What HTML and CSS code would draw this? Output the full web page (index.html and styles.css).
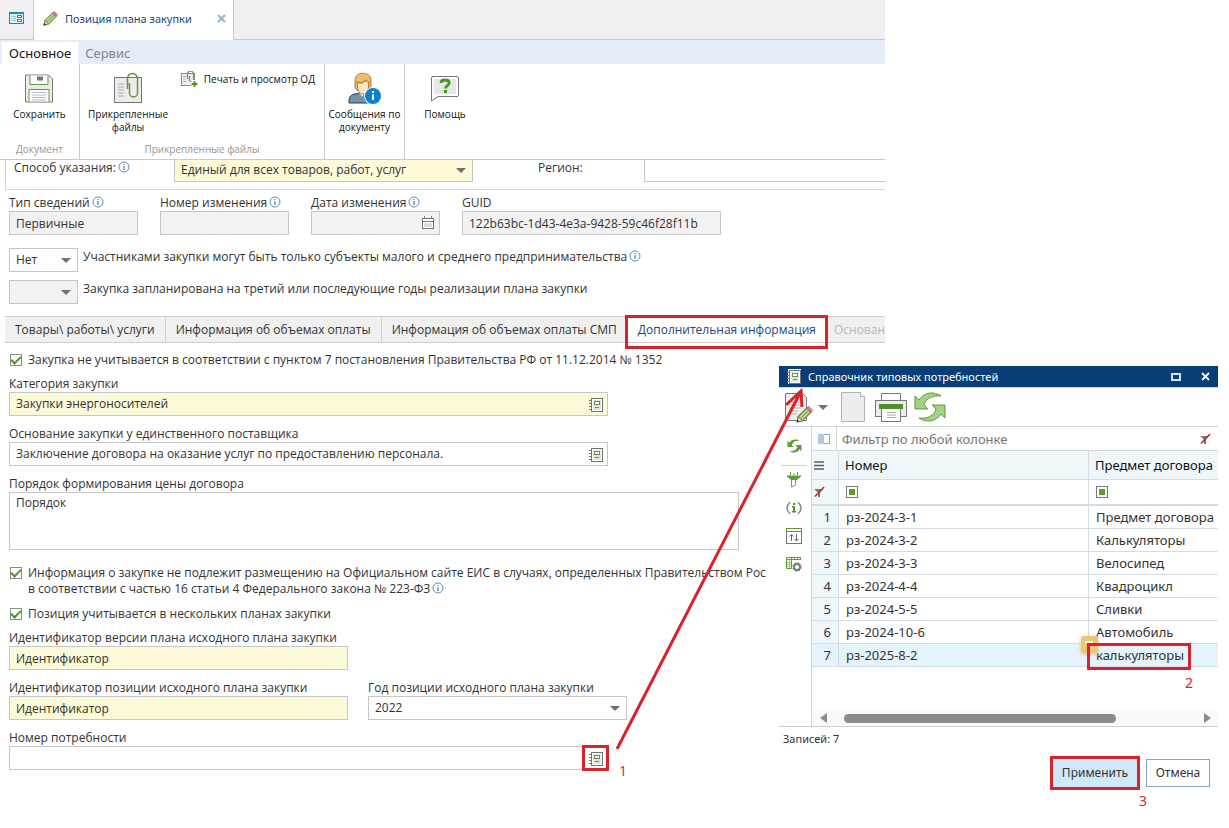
FILE: index.html
```html
<!DOCTYPE html>
<html lang="ru">
<head>
<meta charset="utf-8">
<title>Позиция плана закупки</title>
<link rel="stylesheet" href="styles.css">
</head>
<body>
<svg class="defs" aria-hidden="true">
  <symbol id="info" viewBox="0 0 12 12">
    <circle cx="6" cy="6" r="5" fill="#fff" stroke="#5f8bbd"/>
    <path d="M5.500 3h1v1h-1zM5.500 5h1v4h-1z" fill="#35608f"/>
  </symbol>
  <symbol id="book" viewBox="0 0 14 15">
    <rect x="2.500" y="1.500" width="11" height="13" fill="#fff" stroke="#6f7275"/>
    <rect x="4" y="3" width="8" height="10" fill="#dfe3e3"/>
    <path d="M0 3.500h2M0 6.500h2M0 9.500h2M0 12.500h2" stroke="#6f7275"/>
    <rect x="5.500" y="4.500" width="5" height="3" fill="#fff" stroke="#639a35"/>
    <path d="M6 10.500h4" stroke="#639a35"/>
  </symbol>
  <symbol id="nofilter" viewBox="0 0 12 12">
    <path d="M0 3h9L6 6.500V11H4V6.500z" fill="#777"/>
    <path d="M1 10.500 10 1" stroke="#d01f26" stroke-width="1.500"/>
  </symbol>
  <symbol id="refresh" viewBox="0 0 32 30">
    <path d="M1 4v13h13l-4-4c2-7 9-10 17-9C20-1 10 0 5 8z"/>
    <path d="M31 26V13H18l4 4c-2 7-9 10-17 9 7 5 17 4 22-4z"/>
  </symbol>
  <symbol id="pencil" viewBox="0 0 16 16">
    <path d="M1 15l1-5L10 2l4 4-8 8z" fill="#8fc163" stroke="#5c8a35"/>
    <path d="M3 11l8-8M5 13l8-8" stroke="#e4f2d5" stroke-width=".8"/>
    <path d="M10 2l2-1.500 3.500 3.500L14 6z" fill="#e77c8e" stroke="#b9586b" stroke-width=".8"/>
    <path d="M1 15l1-5 4 4z" fill="#f1dcae" stroke="#7a6b4c" stroke-width=".8"/>
    <path d="M.5 15.500l.8-2.800 2 2z" fill="#333"/>
  </symbol>
</svg>

<main class="app">
  <nav class="window-tabs">
    <button class="home" aria-label="Главная">
      <svg width="16" height="13" viewBox="0 0 16 13"><rect x=".5" y=".5" width="14" height="11" fill="#e3f3fc" stroke="#1787cf"/><path d="M0 1h15" stroke="#1787cf" stroke-width="2"/><path d="M2 4.500h1M4 4.500h3M2 6.500h1M4 6.500h3M2 8.500h1M4 8.500h3" stroke="#8cc6ea"/><rect x="8.500" y="3.500" width="4" height="2" fill="#fff" stroke="#1787cf"/><rect x="8.500" y="7.500" width="4" height="2" fill="#fff" stroke="#1787cf"/></svg>
    </button>
    <div class="window-tab">
      <svg width="15" height="15"><use href="#pencil"/></svg>
      <span>Позиция плана закупки</span>
      <button class="close" aria-label="Закрыть"><svg width="9" height="9" viewBox="0 0 9 9"><path d="M1 1l7 7M8 1 1 8" stroke="#9db0c4" stroke-width="2"/></svg></button>
    </div>
  </nav>

  <nav class="ribbon-tabs">
    <button class="active">Основное</button>
    <button>Сервис</button>
  </nav>

  <section class="ribbon">
    <div class="group g-doc">
      <div class="tools">
        <button class="tool">
          <svg width="28" height="28" viewBox="0 0 28 28"><path d="M.5.5h23l4 4v23H.5z" fill="#ececec" stroke="#74777a"/><path d="M5 1v9h18V1" fill="#fff" stroke="#639a35"/><rect x="12" y="2" width="6" height="4" fill="#74777a"/><path d="M4 27V15h20v12" fill="#fff" stroke="#639a35"/><path d="M7 18h14M7 20.500h14M7 23h14M7 25.500h14" stroke="#bbb"/></svg>
          <span>Сохранить</span>
        </button>
      </div>
      <span class="caption">Документ</span>
    </div>
    <div class="group g-files">
      <div class="tools">
        <button class="tool">
          <svg width="29" height="31" viewBox="0 0 29 31"><rect x=".5" y="4.500" width="27" height="25" fill="#ececec" stroke="#74777a"/><path d="M4 11h6M4 14h6M4 17h6M4 20h6M4 23h6" stroke="#a9acae"/><path d="M14.500 16V5.500a5 5 0 0 1 10 0V20a4 4 0 0 1-8 0V10" transform="translate(-1 0)" fill="none" stroke="#639a35" stroke-width="1.500"/></svg>
          <span>Прикрепленные<br>файлы</span>
        </button>
        <button class="tool-inline">
          <svg width="17" height="17" viewBox="0 0 17 17"><rect x=".5" y="2.500" width="13" height="12" fill="#f0f0f0" stroke="#85888a"/><path d="M2 5.500h3M2 8h3M2 10.500h3" stroke="#a9acae"/><path d="M6.500 8V3a3 3 0 0 1 6 0v6a2 2 0 0 1-4 0V5" fill="none" stroke="#639a35" stroke-width="1.200"/><path d="M13 9v7M9.500 12.500h7" stroke="#fff" stroke-width="4"/><path d="M13.500 10v6M10.500 13h6" stroke="#4d9620" stroke-width="2"/></svg>
          <span>Печать и просмотр ОД</span>
        </button>
      </div>
      <span class="caption">Прикрепленные файлы</span>
    </div>
    <div class="group g-msg">
      <div class="tools">
        <button class="tool">
          <svg width="34" height="33" viewBox="0 0 34 33"><path d="M1 31v-3q0-5 6-6l4-1 7 1 6 3v6z" fill="#7390a8" stroke="#29435a"/><path d="M10 19l4 6 4-6v-4h-8z" fill="#f9dfbd"/><path d="M9 10q5 3 8-1l4 2c0 7-2 11-6 11s-7-5-6-12z" fill="#fbe5c8" stroke="#a87a32" stroke-width=".8"/><path d="M7 16V8c0-9 16-9 16 0v8l-3 3 1-9-3-2q-4 4-9 2l1 9z" fill="#f0bd69" stroke="#98702c" stroke-width=".8"/><circle cx="25" cy="24" r="9" fill="#fff"/><circle cx="25" cy="24" r="8" fill="#0d81cc"/><path d="M24 19h2v2h-2zM24 22.500h2V28h-2z" fill="#fff"/></svg>
          <span>Сообщения по<br>документу</span>
        </button>
      </div>
    </div>
    <div class="group g-help">
      <div class="tools">
        <button class="tool">
          <svg width="30" height="27" viewBox="0 0 30 27"><path d="M2 1.500h25q1.500 0 1.500 1.500v17q0 1.500-1.500 1.500H8l-6.500 4.500V3q0-1.500 1.500-1.500z" fill="#fff" stroke="#74777a"/><rect x="4" y="4" width="22" height="15" fill="#e6e6e6"/><path d="M11 8q0-3 4-3 4.200 0 4.200 3 0 1.700-2.200 3-1.500.8-1.500 2.500" fill="none" stroke="#3f9a17" stroke-width="2.800"/><rect x="14" y="15" width="3" height="3" fill="#3f9a17"/></svg>
          <span>Помощь</span>
        </button>
      </div>
    </div>
  </section>

  <form class="form">
    <div class="scope">
      <label class="scope-label" for="scope">Способ указания:<svg class="info"><use href="#info"/></svg></label>
      <span class="select yellow scope-select"><select id="scope"><option>Единый для всех товаров, работ, услуг</option></select></span>
      <label class="region-label" for="region">Регион:</label>
      <input class="box region" id="region">
    </div>

    <div class="row meta">
      <div class="field w-s"><label for="type">Тип сведений<svg class="info"><use href="#info"/></svg></label><input class="box gray" id="type" value="Первичные" readonly></div>
      <div class="field w-s"><label for="num">Номер изменения<svg class="info"><use href="#info"/></svg></label><input class="box gray" id="num" readonly></div>
      <div class="field w-s"><label for="date">Дата изменения<svg class="info"><use href="#info"/></svg></label>
        <span class="box gray combo"><input id="date" readonly><button type="button" aria-label="Календарь"><svg width="14" height="14" viewBox="0 0 14 14"><rect x="1.500" y="2.500" width="11" height="10" fill="#fff" stroke="#74777a"/><path d="M1 5.500h12" stroke="#74777a"/><rect x="3" y="7" width="8" height="4" fill="#ddd"/><path d="M3.500 0v3M10.500 0v3" stroke="#639a35"/></svg></button></span></div>
      <div class="field w-m"><label for="guid">GUID</label><input class="box gray" id="guid" value="122b63bc-1d43-4e3a-9428-59c46f28f11b" readonly></div>
    </div>

    <div class="choices">
      <div class="choice"><span class="select"><select id="smb"><option>Нет</option></select></span><label for="smb">Участниками закупки могут быть только субъекты малого и среднего предпринимательства<svg class="info"><use href="#info"/></svg></label></div>
      <div class="choice"><span class="select gray"><select id="later"><option></option></select></span><label for="later">Закупка запланирована на третий или последующие годы реализации плана закупки</label></div>
    </div>

    <div class="tabs" role="tablist">
      <button type="button" role="tab">Товары\ работы\ услуги</button>
      <button type="button" role="tab">Информация об объемах оплаты</button>
      <button type="button" role="tab">Информация об объемах оплаты СМП</button>
      <button type="button" role="tab" class="current" aria-selected="true">Дополнительная информация</button>
      <button type="button" role="tab" class="off" disabled>Основан</button>
    </div>

    <div class="panel">
      <label class="check"><input type="checkbox" checked><span>Закупка не учитывается в соответствии с пунктом 7 постановления Правительства РФ от 11.12.2014 № 1352</span></label>
      <div class="fields">
        <div class="field w-l"><label for="cat">Категория закупки</label><span class="box yellow combo"><input id="cat" value="Закупки энергоносителей"><button type="button" aria-label="Выбрать"><svg width="14" height="15"><use href="#book"/></svg></button></span></div>
        <div class="field w-l"><label for="base">Основание закупки у единственного поставщика</label><span class="box combo"><input id="base" value="Заключение договора на оказание услуг по предоставлению персонала."><button type="button" aria-label="Выбрать"><svg width="14" height="15"><use href="#book"/></svg></button></span></div>
        <div class="field w-xl"><label for="order">Порядок формирования цены договора</label><textarea class="box" id="order">Порядок</textarea></div>
      </div>
      <div class="checks">
        <label class="check"><input type="checkbox" checked><span>Информация о закупке не подлежит размещению на Официальном сайте ЕИС в случаях, определенных Правительством Рос<br>в соответствии с частью 16 статьи 4 Федерального закона № 223-ФЗ<svg class="info"><use href="#info"/></svg></span></label>
        <label class="check"><input type="checkbox" checked><span>Позиция учитывается в нескольких планах закупки</span></label>
      </div>
      <div class="fields">
        <div class="field w-h"><label for="ver">Идентификатор версии плана исходного плана закупки</label><input class="box yellow" id="ver" value="Идентификатор"></div>
        <div class="row ids">
          <div class="field w-h"><label for="pos">Идентификатор позиции исходного плана закупки</label><input class="box yellow" id="pos" value="Идентификатор"></div>
          <div class="field w-m"><label for="year">Год позиции исходного плана закупки</label><span class="select"><select id="year"><option>2022</option></select></span></div>
        </div>
        <div class="field w-l"><label for="need">Номер потребности</label><span class="box combo"><input id="need"><button type="button" class="marked" aria-label="Выбрать"><svg width="14" height="15"><use href="#book"/></svg><span class="step step-1">1</span></button></span></div>
      </div>
    </div>
  </form>
</main>

<section class="dialog" role="dialog" aria-labelledby="dlg">
  <header class="titlebar">
    <svg width="14" height="15"><rect x="1" width="13" height="15" fill="#fff"/><use href="#book"/></svg>
    <h2 id="dlg">Справочник типовых потребностей</h2>
    <button aria-label="Развернуть"><svg width="10" height="8" viewBox="0 0 10 8"><rect x="1" y="1" width="8" height="6" fill="none" stroke="#d5e6f4" stroke-width="2"/></svg></button>
    <button aria-label="Закрыть"><svg width="9" height="9" viewBox="0 0 9 9"><path d="M1 1l7 7M8 1 1 8" stroke="#e8f2fa" stroke-width="2"/></svg></button>
  </header>
  <div class="toolbar">
    <button aria-label="Изменить"><svg width="29" height="31" viewBox="0 0 29 31"><path d="M.5 1.500h17l4 4v23H.5z" fill="#efefef" stroke="#74777a"/><path d="M4 10h12M4 13h12M4 16h12M4 19h9M4 22h8" stroke="#b5b5b5"/><g transform="translate(11 14)"><use href="#pencil" width="17" height="17"/></g></svg></button>
    <button class="drop" aria-label="Другие действия"></button>
    <button aria-label="Создать"><svg width="24" height="31" viewBox="0 0 24 31"><path d="M.5.500h19l4 4v25H.5z" fill="#ededed" stroke="#b0b3b5"/><path d="M19.500.5v4h4" fill="#fff" stroke="#b0b3b5"/></svg></button>
    <button aria-label="Печать"><svg width="32" height="31" viewBox="0 0 32 31"><path d="M6.500 9V1.500h19V9" fill="#fff" stroke="#74777a"/><rect x=".5" y="8.500" width="31" height="16" fill="#ededed" stroke="#74777a"/><rect x="6.500" y="16.500" width="19" height="13" fill="#fff" stroke="#74777a"/><rect x="4" y="12" width="24" height="5" fill="#539026"/><path d="M12 20.500h9M12 23h9M12 25.500h9" stroke="#aaa"/></svg></button>
    <button aria-label="Обновить"><svg class="big-refresh" width="32" height="30"><use href="#refresh"/></svg></button>
  </div>
  <div class="work">
    <aside class="rail">
      <button class="first" aria-label="Обновить"><svg class="small-refresh" width="15" height="14"><use href="#refresh"/></svg></button>
      <button aria-label="Фильтр"><svg width="14" height="16" viewBox="0 0 14 16"><path d="M0 3.500h14v1L10 8H4L0 4.500z" fill="#639a35"/><path d="M4.500 8v7l4-2V8" fill="#fff" stroke="#888"/><path d="M3.500 0v3M7 1v2M10.500 0v3" stroke="#639a35"/></svg></button>
      <button aria-label="Сведения"><svg width="16" height="14" viewBox="0 0 16 14"><path d="M4 1Q-2 7 4 13M12 1q6 6 0 12" fill="none" stroke="#888" stroke-width="1.500"/><path d="M7 2h2v2H7zM6 5h3v5h1v1.500H6V10h1V6.500H6z" fill="#4d9620"/></svg></button>
      <button aria-label="Сортировка"><svg width="16" height="16" viewBox="0 0 16 16"><rect x=".5" y=".5" width="15" height="15" fill="#fff" stroke="#74777a"/><path d="M0 .5h16M0 3.500h16" stroke="#639a35"/><path d="M5.500 13V7M3.500 8.500l2-2 2 2M10.500 6v7M8.500 11l2 2 2-2" fill="none" stroke="#666"/></svg></button>
      <button aria-label="Настройки таблицы"><svg width="16" height="16" viewBox="0 0 16 16"><path d="M3.500 4v9M0 6.500h6M0 8.500h6M0 10.500h6" stroke="#a5c88a"/><path d="M.5 1.500v11h5v-11zM5 1.500h10M0 3.500h15M8.500 1v3M11.500 1v3M14.500 1v3" fill="none" stroke="#639a35"/><circle cx="11" cy="11" r="3" fill="#fff" stroke="#74777a" stroke-width="1.800"/><circle cx="11" cy="11" r="4.300" fill="none" stroke="#74777a" stroke-dasharray="1.800 1.600"/></svg></button>
    </aside>
    <div class="grid">
      <div class="search">
        <button aria-label="Колонки"><svg width="12" height="10" viewBox="0 0 12 10"><rect x=".5" y=".5" width="11" height="9" fill="#fff" stroke="#8ba8c4"/><rect width="6" height="10" fill="#b3c8dc"/></svg></button>
        <input aria-label="Фильтр" placeholder="Фильтр по любой колонке">
        <button aria-label="Сбросить фильтр"><svg width="12" height="12"><use href="#nofilter"/></svg></button>
      </div>
      <table>
        <thead>
          <tr><th class="n"><svg width="10" height="9" viewBox="0 0 10 9"><path d="M0 1h10M0 4.500h10M0 8h10" stroke="#5d6265" stroke-width="1.500"/></svg></th><th class="name">Номер</th><th>Предмет договора</th></tr>
          <tr class="filters"><td class="n"><svg width="12" height="12"><use href="#nofilter"/></svg></td><td><span class="mark"></span></td><td><span class="mark"></span></td></tr>
        </thead>
        <tbody>
          <tr><td class="n">1</td><td>рз-2024-3-1</td><td>Предмет договора</td></tr>
          <tr><td class="n">2</td><td>рз-2024-3-2</td><td>Калькуляторы</td></tr>
          <tr><td class="n">3</td><td>рз-2024-3-3</td><td>Велосипед</td></tr>
          <tr><td class="n">4</td><td>рз-2024-4-4</td><td>Квадроцикл</td></tr>
          <tr><td class="n">5</td><td>рз-2024-5-5</td><td>Сливки</td></tr>
          <tr><td class="n">6</td><td>рз-2024-10-6</td><td>Автомобиль</td></tr>
          <tr class="picked"><td class="n">7</td><td>рз-2025-8-2</td><td class="target"><span class="badge"></span>калькуляторы<span class="frame"></span><span class="step step-2">2</span></td></tr>
        </tbody>
      </table>
      <div class="scrollbar"><i class="arrow-l"></i><div class="track"><i class="thumb"></i></div><i class="arrow-r"></i></div>
    </div>
  </div>
  <p class="count">Записей: 7</p>
  <footer class="actions">
    <button class="apply">Применить<span class="step step-3">3</span></button>
    <button class="cancel">Отмена</button>
  </footer>
</section>

<svg class="pointer" width="220" height="380" viewBox="600 380 220 380" aria-hidden="true"><path d="M617 749 801 391M786 405l15-14 1 16" fill="none" stroke="#d9232b" stroke-width="3"/></svg>
</body>
</html>
```

FILE: styles.css
```css
* { box-sizing: border-box; }

body {
  margin: 0;
  position: relative;
  min-height: 100vh;
  background: #fff;
  color: #333;
  font: 13px/16px "Noto Sans", "Open Sans", sans-serif;
  overflow: hidden;
}

button, input, select, textarea { font: inherit; color: inherit; margin: 0; }
button { border: 0; padding: 0; background: none; white-space: nowrap; }
svg { display: block; flex: none; }
.defs { position: absolute; width: 0; height: 0; }

.app { width: 72%; overflow: hidden; }

/* Window tabs */
.window-tabs { display: flex; height: 40px; background: #f0f0f0; border-bottom: 1px solid #c9c9c9; }
.home { width: 34px; display: flex; justify-content: center; align-items: center; border-right: 1px solid #c9c9c9; padding-bottom: 3px; }
.window-tab { display: flex; align-items: center; width: 200px; height: 40px; padding: 0 7px 3px 9px; background: #fff; border-right: 1px solid #c9c9c9; color: #1d4777; font-size: 11px; }
.window-tab span { margin-left: 7px; white-space: nowrap; }
.close { margin-left: auto; }

.ribbon-tabs { display: flex; height: 24px; padding: 2px 2px 0; background: #e5eef8; }
.ribbon-tabs button { padding: 0 7px; color: #7d858d; }
.ribbon-tabs .active { background: #fff; color: #111; }

.ribbon { display: flex; height: 96px; border-bottom: 1px solid #c9c9c9; color: #111; font: 10px/13px "Open Sans", "Noto Sans", sans-serif; }
.group { display: flex; flex-direction: column; border-right: 1px solid #c9c9c9; }
.g-doc { width: 80px; }
.g-files { width: 245px; }
.g-msg { width: 80px; }
.g-help { width: 80px; border: 0; }
.tools { display: flex; flex: 1; justify-content: center; }
.g-files .tools { justify-content: space-between; align-items: flex-start; padding: 0 9px 0 8px; }
.tool { display: flex; flex-direction: column; align-items: center; padding-top: 8px; }
.tool svg { height: 33px; margin-bottom: 3px; }
.tool-inline { display: flex; align-items: center; gap: 6px; padding-top: 7px; }
.caption { height: 16px; text-align: center; color: #969696; }

/* Fields */
.form { padding-bottom: 50px; font: 12px/16px "Open Sans", "Noto Sans", sans-serif; }
.info { display: inline-block; width: 12px; height: 12px; margin-left: 2px; vertical-align: -1px; }
.box { display: block; width: 100%; height: 24px; padding: 0 6px; border: 1px solid #c6c6c6; border-radius: 0; background: #fff; outline: 0; }
.select { display: block; position: relative; height: 24px; border: 1px solid #c6c6c6; background: #fff; }
.select select { appearance: none; width: 100%; height: 22px; padding: 0 20px 0 6px; border: 0; background: none; }
.select::after, .drop::after { content: ""; display: block; border: 5px solid transparent; border-top-color: #707070; border-bottom: 0; }
.select::after { position: absolute; right: 6px; top: 9px; pointer-events: none; }
.yellow { background: #fdfad9; }
.gray { background: #f2f2f2; }
.combo { display: flex; padding: 0 0 0 6px; }
.combo input { flex: 1; min-width: 0; padding: 0; border: 0; background: none; outline: 0; }
.combo button { position: relative; display: flex; align-items: center; justify-content: center; width: 22px; }

.scope { display: flex; height: 30px; margin-left: 5px; padding-left: 8px; border: solid #d4d4d4; border-width: 0 0 1px 1px; overflow: hidden; }
.scope > * { flex: none; }
.scope .box, .scope .select { margin-top: -2px; }
.scope-label { width: 160px; }
.scope-select { width: 299px; }
.region-label { width: 106px; margin-left: 65px; }
.scope .region { width: 300px; }

.row { display: flex; }
.meta { gap: 22px; padding: 5px 9px 0; }
.ids { gap: 20px; }
.field label { display: block; height: 16px; white-space: nowrap; }
.w-s { width: 129px; }
.w-m { width: 259px; }
.w-h { width: 339px; }
.w-l { width: 599px; }
.w-xl { width: 730px; }
textarea.box { height: 58px; padding: 2px 6px; resize: none; overflow: hidden; }

.choices { display: flex; flex-direction: column; gap: 8px; padding: 13px 9px 12px; }
.choice { display: flex; gap: 5px; white-space: nowrap; }
.choice .select { width: 69px; }
.choice label { padding-top: 1px; }

.tabs { display: flex; height: 27px; margin-left: 5px; background: #f0f0f0; border: solid #cfcfcf; border-width: 1px 0; }
.tabs button { padding: 0 10px; border-right: 1px solid #cfcfcf; }
.tabs .current { position: relative; background: #fff; color: #1d4777; }
.tabs .current::after { content: ""; position: absolute; inset: -2px -2px -7px -3px; border: 3px solid #d9232b; }
.tabs .off { padding: 0 7px; border-right: 0; color: #b8b8b8; }

.panel { padding: 9px 9px 0; }
.check { display: flex; gap: 6px; padding-left: 1px; white-space: nowrap; }
.check input { appearance: none; flex: none; width: 12px; height: 12px; margin-top: 2px; border: 1px solid #8a8a8a; background: #fff; display: grid; place-items: center; }
.check input:checked::after { content: ""; width: 8px; height: 4px; margin-top: -2px; border: solid #4d9620; border-width: 0 0 2px 2px; transform: rotate(-45deg); }
.fields { display: flex; flex-direction: column; gap: 10px; margin-top: 8px; }
.checks { display: flex; flex-direction: column; gap: 9px; margin-top: 15px; }

/* Step annotations */
.step { position: absolute; color: #d9232b; font-size: 14px; line-height: 16px; }
.marked::before { content: ""; position: absolute; inset: -2px -2px -2px -3px; border: 3px solid #d9232b; }
.step-1 { left: 34px; top: 16px; }
.step-2 { left: 96px; top: 31px; }
.step-3 { left: 86px; top: 34px; }
.pointer { position: absolute; left: 600px; top: 380px; pointer-events: none; }

/* Lookup dialog */
.dialog { position: absolute; top: 366px; right: 11px; width: 439px; background: #fff; }
.titlebar { display: flex; align-items: center; height: 22px; padding: 0 8px; background: #083d75; border-bottom: 1px solid #c9d8e6; color: #fff; }
.titlebar h2 { flex: 1; margin: 0 0 0 7px; font-size: 11px; line-height: 16px; font-weight: 400; }
.titlebar button { margin-left: 20px; }
.toolbar { display: flex; align-items: center; height: 39px; padding: 0 6px; border-bottom: 1px solid #cbd5de; }
.toolbar .drop { margin: 0 13px 0 4px; }
.toolbar button + button:not(.drop) { margin-right: 7px; }
.toolbar .drop + button:not(.drop) { margin-right: 10px; }
.big-refresh { fill: #a5d08a; stroke: #69963f; }
.small-refresh { fill: #5b9d31; }

.work { display: flex; height: 300px; border-bottom: 1px solid #cbcfd3; }
.rail { display: flex; flex-direction: column; align-items: center; width: 32px; padding: 0 4px 0 2px; }
.rail button { display: grid; place-items: center; width: 100%; height: 28px; }
.rail .first { height: 39px; border-bottom: 1px solid #d0d0d0; }
.grid { display: flex; flex-direction: column; flex: 1; min-width: 0; border-left: 1px solid #cdd9e3; }
.search { display: flex; height: 24px; border-bottom: 1px solid #cdd9e3; }
.search button { display: grid; place-items: center; width: 24px; }
.search input { flex: 1; min-width: 0; padding: 0 5px; border: 0; border-left: 1px solid #cdd9e3; outline: 0; }
.search input::placeholder { color: #757575; opacity: 1; }

table { width: 100%; table-layout: fixed; border-collapse: separate; border-spacing: 0; }
th, td { height: 23px; padding: 0 0 0 7px; border-bottom: 1px solid #d3dce4; border-left: 1px solid #d3dce4; text-align: left; font-weight: 400; white-space: nowrap; }
th { height: 29px; padding-left: 6px; background: #eff7fb; color: #111; }
.name { width: 250px; }
.n { width: 26px; padding: 0 7px 0 0; border-left: 0; background: #eff7fb; text-align: right; }
thead .n { padding: 0 0 0 2px; }
.filters td { height: 26px; border-bottom-width: 2px; }
.mark { display: block; width: 12px; height: 12px; border: 1px solid #74777a; background: #5b9d31; box-shadow: inset 0 0 0 2px #fff; }
.picked td { background: #e5f3fc; }
.target { position: relative; }
.badge { position: absolute; left: -8px; top: -8px; width: 17px; height: 17px; border-radius: 3px; background: #eec577; box-shadow: 0 1px 4px #d9bd88; }
.badge::after { content: ""; position: absolute; left: 4px; top: 5px; width: 8px; height: 2px; background: #fff; }
.frame { position: absolute; left: -2px; top: -1px; width: 104px; height: 27px; border: 3px solid #d9232b; }

.scrollbar { display: flex; align-items: center; height: 16px; margin-top: auto; padding: 0 7px 0 8px; background: #fafafa; }
.track { flex: 1; padding: 0 88px 0 17px; }
.thumb { display: block; height: 9px; border-radius: 5px; background: #8b8b8b; }
.arrow-l, .arrow-r { border: 5px solid transparent; }
.arrow-l { border-right: 7px solid #8b8b8b; border-left: 0; }
.arrow-r { border-left: 7px solid #8b8b8b; border-right: 0; }

.count { margin: 4px 4px 0; font-size: 11px; line-height: 16px; }
.actions { display: flex; align-items: center; justify-content: flex-end; gap: 6px; padding: 9px 8px 0 0; font-size: 12px; }
.apply { position: relative; width: 90px; height: 34px; border: 3px solid #d9232b; background: #cfe9fa; }
.cancel { width: 64px; height: 28px; border: 1px solid #86a9c2; }
```
